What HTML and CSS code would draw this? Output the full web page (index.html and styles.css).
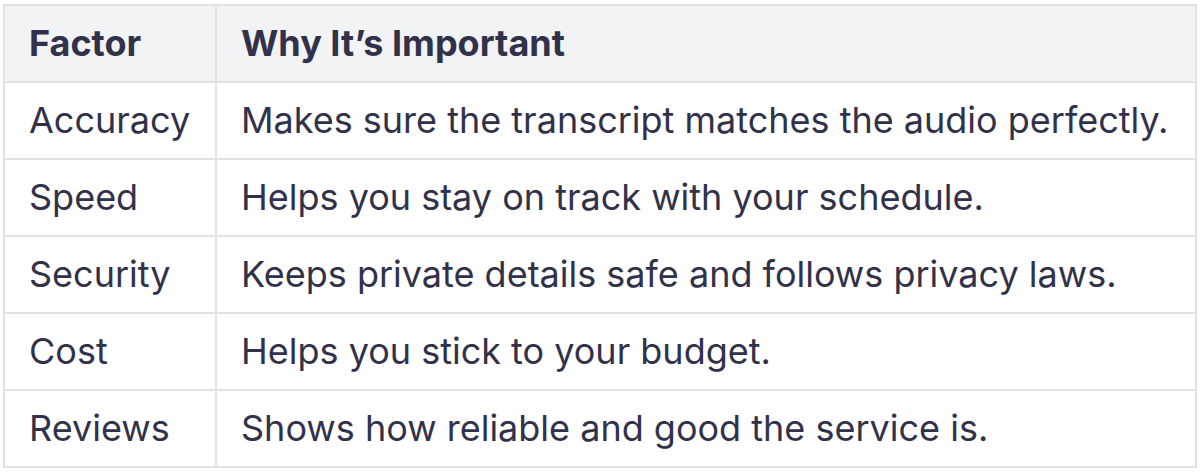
FILE: index.html
```html
<!DOCTYPE html>
<html>
<head>
<meta charset="utf-8">
<link rel="stylesheet" href="styles.css">
</head>
<body>
<table class="factors">
  <thead>
    <tr><th class="col-factor">Factor</th><th>Why It’s Important</th></tr>
  </thead>
  <tbody>
    <tr><td>Accuracy</td><td>Makes sure the transcript matches the audio perfectly.</td></tr>
    <tr><td>Speed</td><td>Helps you stay on track with your schedule.</td></tr>
    <tr><td>Security</td><td>Keeps private details safe and follows privacy laws.</td></tr>
    <tr><td>Cost</td><td>Helps you stick to your budget.</td></tr>
    <tr><td>Reviews</td><td>Shows how reliable and good the service is.</td></tr>
  </tbody>
</table>
</body>
</html>
```
FILE: styles.css
```css
html, body {
  margin: 0;
  background: #ffffff;
}
body {
  padding: 4px 7px 0 3px;
  font-family: Inter, "Noto Sans", sans-serif;
  color: #31324a;
}
.factors {
  width: 1194px;
  border-collapse: collapse;
  border: 2px solid #e1e1e6;
  font-size: 36px;
  line-height: 45px;
}
.factors th,
.factors td {
  border: 2px solid #e1e1e6;
  padding: 15px 24px;
  text-align: left;
  vertical-align: middle;
}
.factors th {
  background: #f2f3f5;
  font-weight: 700;
}
.factors td {
  font-weight: 400;
}
.col-factor {
  width: 162px;
}
```
